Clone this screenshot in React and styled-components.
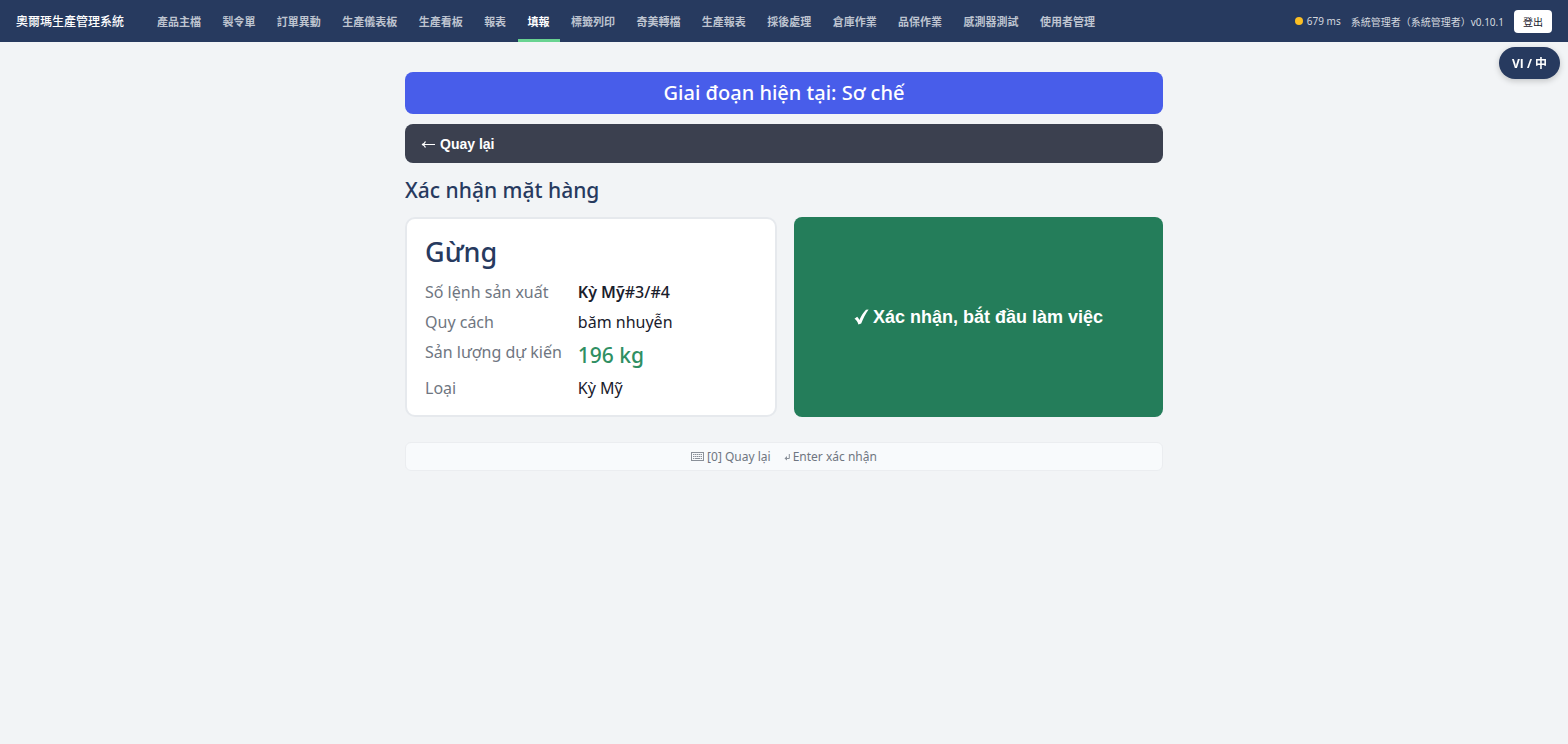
import React, { useState } from "react";
import styled, { createGlobalStyle } from "styled-components";

const GlobalStyle = createGlobalStyle`
  * {
    box-sizing: border-box;
  }
  body {
    margin: 0;
    background-color: #f2f4f6;
    color: #1a202c;
    font-family: "Noto Sans", "Noto Sans CJK TC", sans-serif;
  }
  p, h1, h2, dl, dd {
    margin: 0;
  }
`;

const Header = styled.header`
  display: flex;
  align-items: center;
  height: 42px;
  padding: 0 16px;
  background-color: #273a5f;
  color: #fff;
`;

const Brand = styled.p`
  margin-right: 23px;
  font-size: 12px;
  font-weight: 500;
  white-space: nowrap;
`;

const Nav = styled.nav`
  display: flex;
  flex: 1;
  justify-content: space-between;
  align-self: stretch;
  max-width: 958px;
`;

const NavLink = styled.a`
  display: flex;
  align-items: center;
  padding: 0 10px;
  border-top: 3px solid transparent;
  border-bottom: 3px solid ${props => (props.$active ? "#68d391" : "transparent")};
  color: ${props => (props.$active ? "#fff" : "#bec4d0")};
  font-size: 11px;
  font-weight: 700;
  text-decoration: none;
  white-space: nowrap;
`;

const UserArea = styled.div`
  display: flex;
  align-items: center;
  gap: 10px;
  margin-left: auto;
  color: #d4d8df;
  font-size: 10px;
  white-space: nowrap;
`;

const Ping = styled.span`
  display: flex;
  align-items: center;
  gap: 4px;
`;

const Dot = styled.span`
  width: 8px;
  height: 8px;
  border-radius: 50%;
  background-color: #fbbf24;
`;

const LogoutButton = styled.button`
  width: 38px;
  height: 23px;
  padding: 0;
  border: none;
  border-radius: 4px;
  background-color: #fff;
  color: #1a202c;
  font-family: inherit;
  font-size: 10px;
`;

const LangButton = styled.button`
  position: fixed;
  top: 47px;
  right: 8px;
  height: 32px;
  padding: 0 13px;
  border: none;
  border-radius: 16px;
  background-color: #273a5f;
  box-shadow: 0 2px 6px rgba(0, 0, 0, 0.2);
  color: #fff;
  font-family: "Open Sans", "Noto Sans CJK TC", sans-serif;
  font-size: 12px;
  font-weight: 700;
`;

const Main = styled.main`
  display: flex;
  flex-direction: column;
  max-width: 758px;
  margin: 30px auto 0;
`;

const StageBanner = styled.p`
  padding: 6px 16px;
  border-radius: 8px;
  background-color: #485dea;
  color: #fff;
  font-size: 20px;
  font-weight: 500;
  line-height: 30px;
  text-align: center;
`;

const BackButton = styled.button`
  display: flex;
  align-items: center;
  gap: 4px;
  height: 39px;
  margin-top: 10px;
  padding: 0 16px;
  border: none;
  border-radius: 8px;
  background-color: #3b404f;
  color: #fff;
  font-family: "Liberation Sans", sans-serif;
  font-size: 14px;
  font-weight: 700;
`;

const Title = styled.h1`
  margin: 12px 0;
  color: #273a5f;
  font-size: 21px;
  font-weight: 500;
  line-height: 30px;
`;

const Columns = styled.div`
  display: grid;
  grid-template-columns: 372fr 369fr;
  gap: 17px;
`;

const Card = styled.section`
  padding: 15px 18px;
  border: 2px solid #e6e9ed;
  border-radius: 10px;
  background-color: #fff;
`;

const ItemName = styled.h2`
  color: #273a5f;
  font-size: 27px;
  font-weight: 500;
  line-height: 36px;
`;

const Details = styled.dl`
  display: grid;
  grid-template-columns: auto 1fr;
  gap: 6px 16px;
  margin-top: 10px;
  font-size: 16px;
  line-height: 24px;
`;

const Label = styled.dt`
  color: #6f7681;
`;

const Value = styled.dd`
  font-weight: ${props => (props.$strong ? 500 : 400)};
`;

const Product = styled.span`
  font-weight: 600;
`;

const Amount = styled.dd`
  color: #2f8f63;
  font-size: 21px;
  font-weight: 500;
  line-height: 30px;
`;

const ConfirmButton = styled.button`
  display: flex;
  align-items: center;
  justify-content: center;
  gap: 4px;
  border: none;
  border-radius: 8px;
  background-color: #247d5a;
  color: #fff;
  font-family: "Liberation Sans", sans-serif;
  font-size: 18px;
  font-weight: 700;
`;

const HintBar = styled.footer`
  display: flex;
  align-items: center;
  justify-content: center;
  gap: 13px;
  height: 29px;
  margin-top: 25px;
  border: 1px solid #ebedf0;
  border-radius: 6px;
  background-color: #f8fafc;
  color: #6f7681;
  font-size: 12px;
`;

const Hint = styled.span`
  display: flex;
  align-items: center;
  gap: 3px;
`;

const navItems = [
  "產品主檔",
  "製令單",
  "訂單異動",
  "生產儀表板",
  "生產看板",
  "報表",
  "填報",
  "標籤列印",
  "奇美轉檔",
  "生產報表",
  "採後處理",
  "倉庫作業",
  "品保作業",
  "感測器測試",
  "使用者管理",
];

function ArrowIcon() {
  return (
    <svg width="15" height="10" viewBox="0 0 15 10" fill="none" stroke="currentColor" strokeWidth="1.2" aria-hidden="true">
      <path d="M14 5.5H1.5M4.500 2.500C4 3.800 3 5 1 5.500C3 6 4 7.200 4.500 8.500" />
    </svg>
  );
}

function CheckIcon() {
  return (
    <svg width="15" height="16" viewBox="0 0 15 16" fill="currentColor" aria-hidden="true">
      <path d="M0.500 9.800L3.200 7.800C4.200 8.600 4.800 9.800 5.400 11C7.200 7 9.400 3.400 12 0.800L14.600 0.400C11.600 4.600 9 9.400 7.200 14.600L4.400 15.400C3.600 12.800 2.300 10.800 0.500 9.800Z" />
    </svg>
  );
}

function KeyboardIcon() {
  return (
    <svg width="13" height="10" viewBox="0 0 13 10" fill="none" stroke="currentColor" opacity="0.8" aria-hidden="true">
      <rect x="0.500" y="0.500" width="12" height="8" />
      <path d="M2 2.500H11M2 4.500H11" strokeDasharray="1.400 0.500" />
      <path d="M2 6.500H3.300M4 6.500H9M9.700 6.500H11" />
    </svg>
  );
}

function EnterIcon() {
  return (
    <svg width="6" height="8" viewBox="0 0 6 8" fill="none" stroke="currentColor" opacity="0.8" aria-hidden="true">
      <path d="M5.300 1V5.500H1.500" />
      <path d="M3 3L0.500 5.500L3 7.500Z" fill="currentColor" stroke="none" />
    </svg>
  );
}

export default function App() {
  const [active, setActive] = useState("填報");

  return (
    <>
      <GlobalStyle />
      <Header>
        <Brand>奧爾瑪生產管理系統</Brand>
        <Nav>
          {navItems.map(item => (
            <NavLink
              key={item}
              href="#"
              $active={item === active}
              onClick={() => setActive(item)}
            >
              {item}
            </NavLink>
          ))}
        </Nav>
        <UserArea>
          <Ping>
            <Dot />
            679 ms
          </Ping>
          <span>系統管理者（系統管理者）v0.10.1</span>
          <LogoutButton type="button">登出</LogoutButton>
        </UserArea>
      </Header>
      <LangButton type="button">VI / 中</LangButton>
      <Main>
        <StageBanner>Giai đoạn hiện tại: Sơ chế</StageBanner>
        <BackButton type="button">
          <ArrowIcon />
          Quay lại
        </BackButton>
        <Title>Xác nhận mặt hàng</Title>
        <Columns>
          <Card>
            <ItemName>Gừng</ItemName>
            <Details>
              <Label>Số lệnh sản xuất</Label>
              <Value $strong>
                <Product>Kỳ Mỹ</Product>#3/#4
              </Value>
              <Label>Quy cách</Label>
              <Value>băm nhuyễn</Value>
              <Label>Sản lượng dự kiến</Label>
              <Amount>196 kg</Amount>
              <Label>Loại</Label>
              <Value>Kỳ Mỹ</Value>
            </Details>
          </Card>
          <ConfirmButton type="button">
            <CheckIcon />
            Xác nhận, bắt đầu làm việc
          </ConfirmButton>
        </Columns>
        <HintBar>
          <Hint>
            <KeyboardIcon />
            [0] Quay lại
          </Hint>
          <Hint>
            <EnterIcon />
            Enter xác nhận
          </Hint>
        </HintBar>
      </Main>
    </>
  );
}
